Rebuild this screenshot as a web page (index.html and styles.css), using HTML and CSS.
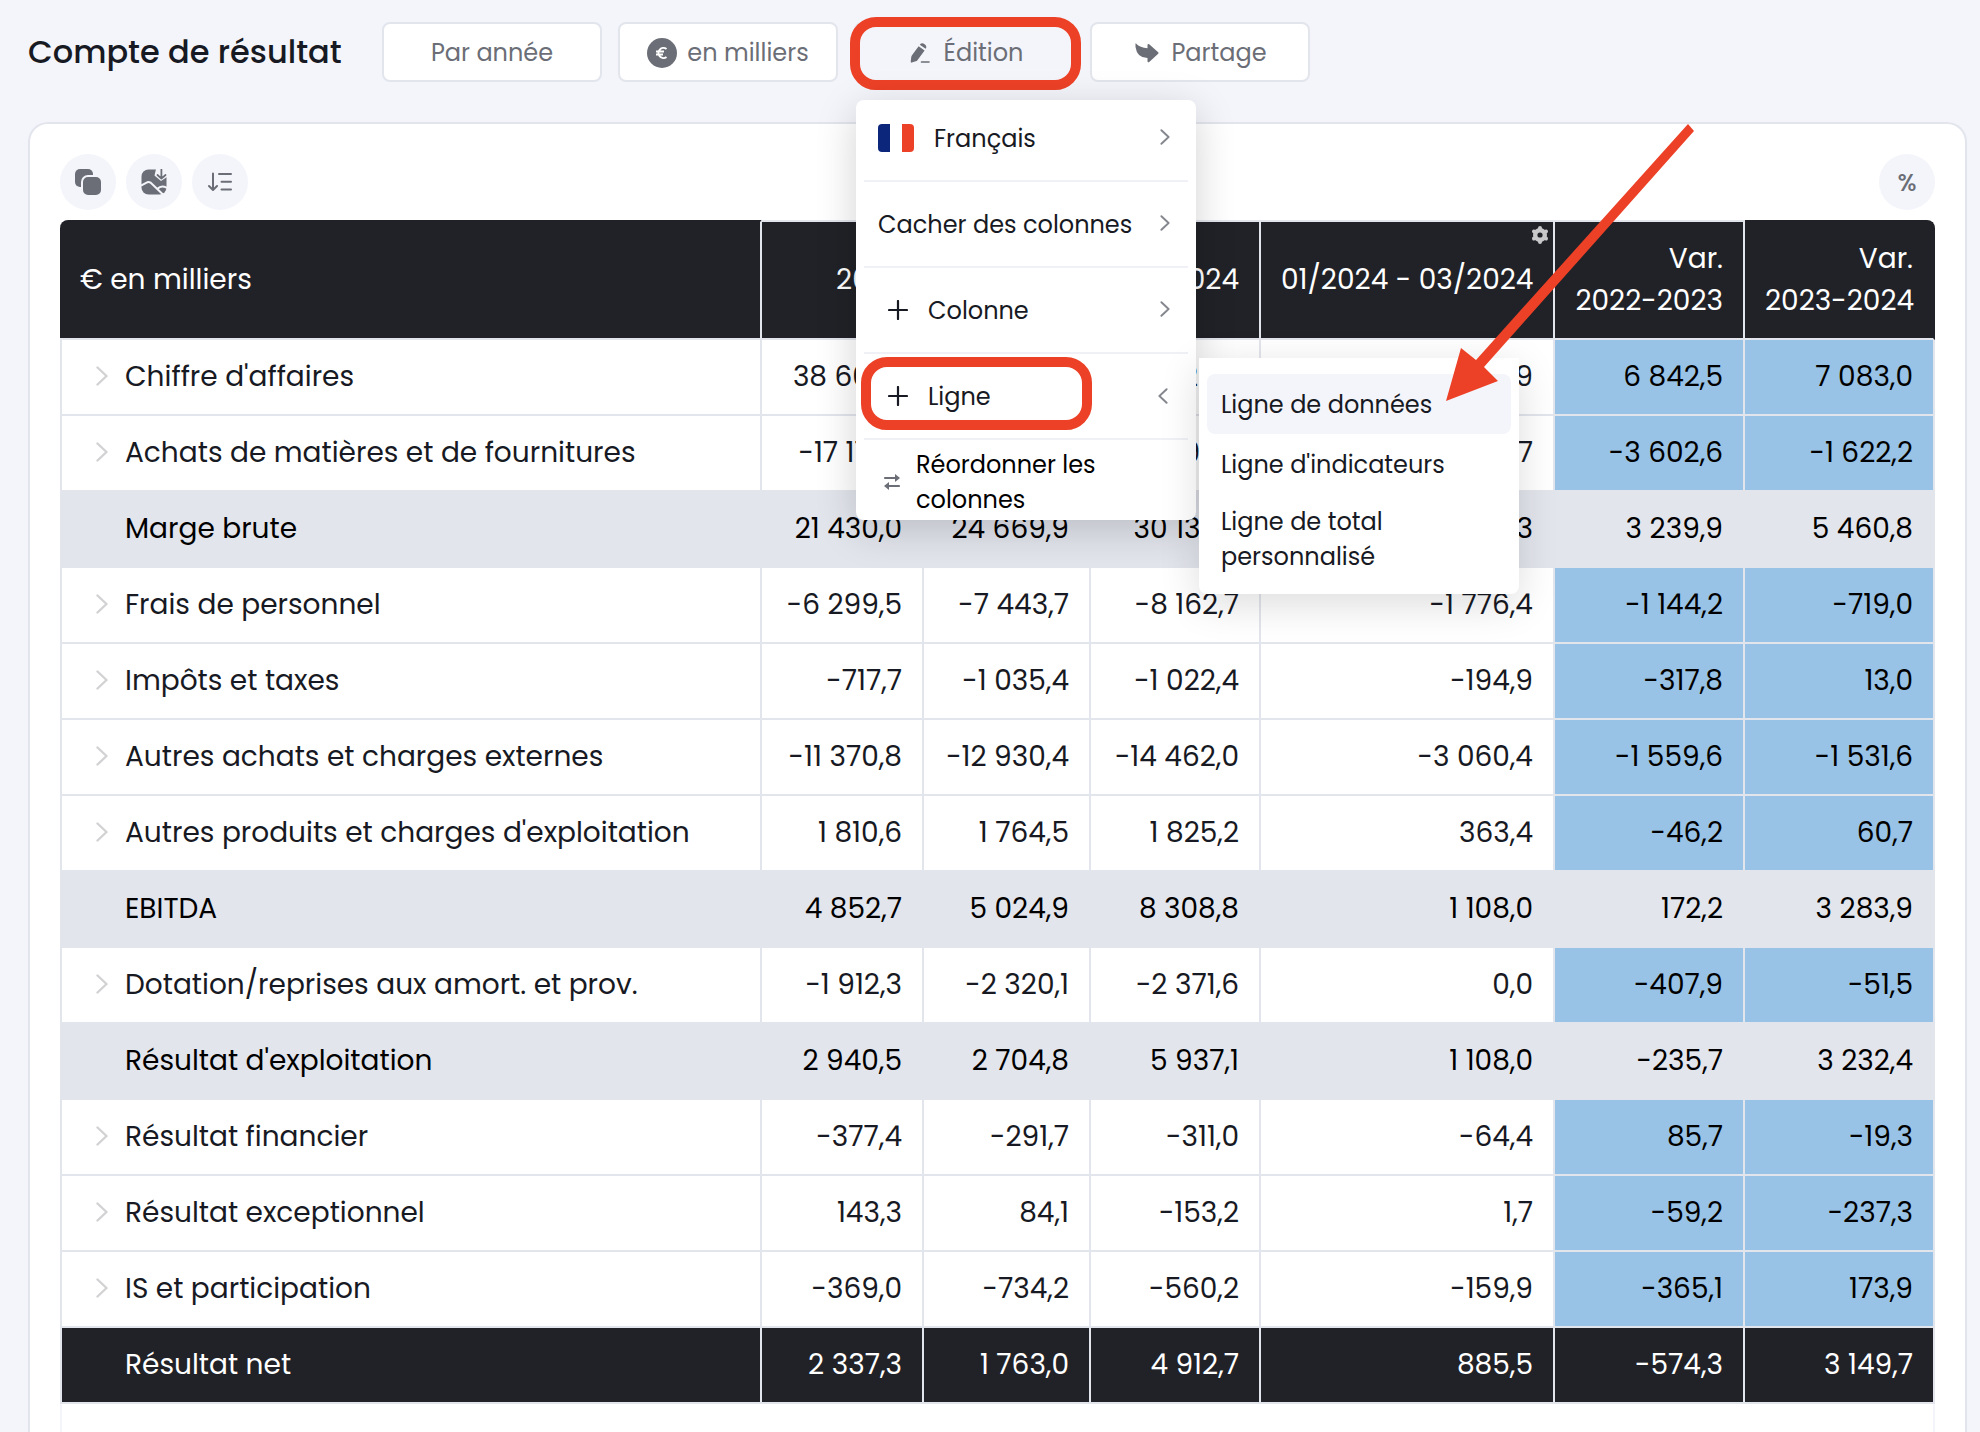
FILE: index.html
```html
<!DOCTYPE html>
<html lang="fr">
<head>
    <meta charset="UTF-8">
    <meta name="viewport" content="width=device-width, initial-scale=1.0">
    <title>Compte de résultat</title>
    <link rel="stylesheet" href="styles.css">
</head>
<body>
    <!-- Shared icons -->
    <svg class="sprite" aria-hidden="true">
        <symbol id="chevron" viewBox="0 0 12 20">
            <path d="M1.5 1.5 L10.5 10 L1.5 18.5" fill="none" stroke="currentColor" stroke-width="2.4" stroke-linecap="round" stroke-linejoin="round"/>
        </symbol>
        <symbol id="plus" viewBox="0 0 20 20">
            <path d="M10 1 V19 M1 10 H19" fill="none" stroke="currentColor" stroke-width="2.2" stroke-linecap="round"/>
        </symbol>
    </svg>

    <header class="topbar">
        <h1>Compte de résultat</h1>
        <div class="actions">
            <button class="btn" type="button">Par année</button>
            <button class="btn" type="button">
                <svg width="30" height="30" viewBox="0 0 30 30">
                    <circle cx="15" cy="15" r="15" fill="#6b6e76"/>
                    <path d="M19.5 11 A5 5 0 1 0 19.5 19 M9 13.6 H17 M9 16.6 H16" fill="none" stroke="#fff" stroke-width="2"/>
                </svg>
                en milliers
            </button>
            <div class="dropdown">
                <button class="btn btn-active marked" type="button" aria-expanded="true">
                    <svg width="20" height="20" viewBox="0 0 20 20">
                        <path d="M8.6 3.2 L14.6 7.4 L7.4 17.2 Q6.8 18 5.8 18.3 L1.8 19.6 Q0.7 19.8 0.7 18.6 L1.2 14.4 Q1.3 13.3 2 12.3 Z" fill="currentColor"/>
                        <path d="M9.8 1.7 Q11.8 -0.7 14.6 1.2 Q17.3 3.3 15.7 5.8 Z" fill="currentColor"/>
                        <path d="M11.5 19 H19" stroke="currentColor" stroke-width="1.6" stroke-linecap="round"/>
                    </svg>
                    Édition
                </button>

                <div class="menu">
                    <button class="menu-item" type="button">
                        <svg class="flag" width="36" height="28" viewBox="0 0 36 28">
                            <path d="M12 0 H4 Q0 0 0 4 V24 Q0 28 4 28 H12 Z" fill="#0c267c"/>
                            <path d="M24 0 H32 Q36 0 36 4 V24 Q36 28 32 28 H24 Z" fill="#ec4127"/>
                        </svg>
                        <span>Français</span>
                        <svg class="arrow" width="10" height="16"><use href="#chevron"/></svg>
                    </button>
                    <button class="menu-item" type="button">
                        <span>Cacher des colonnes</span>
                        <svg class="arrow" width="10" height="16"><use href="#chevron"/></svg>
                    </button>
                    <button class="menu-item menu-item-add" type="button">
                        <svg width="20" height="20"><use href="#plus"/></svg>
                        <span>Colonne</span>
                        <svg class="arrow" width="10" height="16"><use href="#chevron"/></svg>
                    </button>
                    <div class="dropdown">
                        <button class="menu-item menu-item-add marked" type="button" aria-expanded="true">
                            <svg width="20" height="20"><use href="#plus"/></svg>
                            <span>Ligne</span>
                            <svg class="arrow arrow-back" width="10" height="16"><use href="#chevron"/></svg>
                        </button>
                        <div class="submenu">
                            <button class="submenu-item selected" type="button">Ligne de données</button>
                            <button class="submenu-item" type="button">Ligne d'indicateurs</button>
                            <button class="submenu-item" type="button">Ligne de total personnalisé</button>
                            <svg class="pointer" width="248" height="278" viewBox="0 0 248 278">
                                <path d="M0 277 L15 224 L30 236 L242 0 L248 7 L38 243 L52 257 Z" fill="#ec4127"/>
                            </svg>
                        </div>
                    </div>
                    <button class="menu-item menu-item-reorder" type="button">
                        <svg width="16" height="18" viewBox="0 0 16 18">
                            <path d="M0.8 5 H13 M15.2 13 H3" fill="none" stroke="#6b6e76" stroke-width="1.8" stroke-linecap="round"/>
                            <path d="M11 1 L16 5 L11 9 Z M5 9 L0 13 L5 17 Z" fill="#6b6e76"/>
                        </svg>
                        <span>Réordonner les colonnes</span>
                    </button>
                </div>
            </div>
            <button class="btn btn-share" type="button">
                <svg width="24" height="20" viewBox="0 0 24 20">
                    <path d="M0.5 0.8 Q0 0 1 0.6 Q5 5 12.5 5.2 V2 Q12.7 0.2 14.2 1.3 L23.2 9.2 Q24 10 23.2 10.8 L14.2 18.9 Q12.7 20 12.5 18.2 V15 Q2 15 0.5 4 Z" fill="currentColor"/>
                </svg>
                Partage
            </button>
        </div>
    </header>

    <main class="card">
        <div class="toolbar">
            <button class="round" type="button" aria-label="Copier">
                <svg width="28" height="28" viewBox="0 0 28 28">
                    <rect x="1" y="1" width="18" height="18" rx="5" fill="#6b6e76"/>
                    <rect x="8" y="8" width="20" height="20" rx="6" fill="#6b6e76" stroke="#f4f5fa" stroke-width="2"/>
                </svg>
            </button>
            <button class="round" type="button" aria-label="Exporter en image">
                <svg width="26" height="26" viewBox="0 0 26 26">
                    <rect x="0.5" y="0.5" width="25" height="25" rx="7" fill="#6b6e76"/>
                    <path d="M0 16.5 L6.5 13.2 Q8 12.6 9.5 13.6 L22 25.5 M16.5 19.8 Q20.5 15.5 26 19" fill="none" stroke="#f4f5fa" stroke-width="2"/>
                    <path d="M15 0 H26 V8 L20 12 L13.5 6.5 Z" fill="#f4f5fa"/>
                    <path d="M20.4 0.5 V9 M16.5 6 L20.4 9.6 L24.5 6" fill="none" stroke="#6b6e76" stroke-width="1.8" stroke-linecap="round" stroke-linejoin="round"/>
                </svg>
            </button>
            <button class="round" type="button" aria-label="Trier">
                <svg width="24" height="20" viewBox="0 0 24 20">
                    <path d="M5 1.5 V17.5 M1 14 L5 18 L9 14 M11 2 H23 M13.5 9.8 H23 M13.5 17.5 H23" fill="none" stroke="#6b6e76" stroke-width="2" stroke-linecap="round" stroke-linejoin="round"/>
                </svg>
            </button>
            <button class="round round-last" type="button">%</button>
        </div>

        <table>
            <colgroup>
                <col>
                <col class="col-2022">
                <col class="col-2023">
                <col class="col-2024">
                <col class="col-period">
                <col class="col-var">
                <col class="col-var">
            </colgroup>
            <thead>
                <tr>
                    <th>€ en milliers</th>
                    <th>2022</th>
                    <th>2023</th>
                    <th>2024</th>
                    <th class="has-gear">01/2024 - 03/2024
                        <svg class="gear" width="18" height="18" viewBox="0 0 18 18">
                            <circle cx="9" cy="9" r="4.8" fill="none" stroke="#c8c8ca" stroke-width="4.4"/>
                            <path d="M9 2 V3 M9 15 V16 M3 5.5 L4 6 M14 12 L15 12.5 M15 5.5 L14 6 M4 12 L3 12.5" stroke="#c8c8ca" stroke-width="4" stroke-linecap="round"/>
                        </svg>
                    </th>
                    <th>Var.<br>2022-2023</th>
                    <th>Var.<br>2023-2024</th>
                </tr>
            </thead>
            <tbody>
                <tr>
                    <td><svg class="toggle" width="12" height="20"><use href="#chevron"/></svg>Chiffre d'affaires</td>
                    <td>38 604,1</td><td>45 446,6</td><td>52 529,6</td><td>10 132,9</td><td>6 842,5</td><td>7 083,0</td>
                </tr>
                <tr>
                    <td><svg class="toggle" width="12" height="20"><use href="#chevron"/></svg>Achats de matières et de fournitures</td>
                    <td>-17 174,1</td><td>-20 776,7</td><td>-22 398,9</td><td>-4 356,7</td><td>-3 602,6</td><td>-1 622,2</td>
                </tr>
                <tr class="subtotal">
                    <td>Marge brute</td>
                    <td>21 430,0</td><td>24 669,9</td><td>30 130,7</td><td>5 776,3</td><td>3 239,9</td><td>5 460,8</td>
                </tr>
                <tr>
                    <td><svg class="toggle" width="12" height="20"><use href="#chevron"/></svg>Frais de personnel</td>
                    <td>-6 299,5</td><td>-7 443,7</td><td>-8 162,7</td><td>-1 776,4</td><td>-1 144,2</td><td>-719,0</td>
                </tr>
                <tr>
                    <td><svg class="toggle" width="12" height="20"><use href="#chevron"/></svg>Impôts et taxes</td>
                    <td>-717,7</td><td>-1 035,4</td><td>-1 022,4</td><td>-194,9</td><td>-317,8</td><td>13,0</td>
                </tr>
                <tr>
                    <td><svg class="toggle" width="12" height="20"><use href="#chevron"/></svg>Autres achats et charges externes</td>
                    <td>-11 370,8</td><td>-12 930,4</td><td>-14 462,0</td><td>-3 060,4</td><td>-1 559,6</td><td>-1 531,6</td>
                </tr>
                <tr>
                    <td><svg class="toggle" width="12" height="20"><use href="#chevron"/></svg>Autres produits et charges d'exploitation</td>
                    <td>1 810,6</td><td>1 764,5</td><td>1 825,2</td><td>363,4</td><td>-46,2</td><td>60,7</td>
                </tr>
                <tr class="subtotal">
                    <td>EBITDA</td>
                    <td>4 852,7</td><td>5 024,9</td><td>8 308,8</td><td>1 108,0</td><td>172,2</td><td>3 283,9</td>
                </tr>
                <tr>
                    <td><svg class="toggle" width="12" height="20"><use href="#chevron"/></svg>Dotation/reprises aux amort. et prov.</td>
                    <td>-1 912,3</td><td>-2 320,1</td><td>-2 371,6</td><td>0,0</td><td>-407,9</td><td>-51,5</td>
                </tr>
                <tr class="subtotal">
                    <td>Résultat d'exploitation</td>
                    <td>2 940,5</td><td>2 704,8</td><td>5 937,1</td><td>1 108,0</td><td>-235,7</td><td>3 232,4</td>
                </tr>
                <tr>
                    <td><svg class="toggle" width="12" height="20"><use href="#chevron"/></svg>Résultat financier</td>
                    <td>-377,4</td><td>-291,7</td><td>-311,0</td><td>-64,4</td><td>85,7</td><td>-19,3</td>
                </tr>
                <tr>
                    <td><svg class="toggle" width="12" height="20"><use href="#chevron"/></svg>Résultat exceptionnel</td>
                    <td>143,3</td><td>84,1</td><td>-153,2</td><td>1,7</td><td>-59,2</td><td>-237,3</td>
                </tr>
                <tr>
                    <td><svg class="toggle" width="12" height="20"><use href="#chevron"/></svg>IS et participation</td>
                    <td>-369,0</td><td>-734,2</td><td>-560,2</td><td>-159,9</td><td>-365,1</td><td>173,9</td>
                </tr>
                <tr class="total">
                    <td>Résultat net</td>
                    <td>2 337,3</td><td>1 763,0</td><td>4 912,7</td><td>885,5</td><td>-574,3</td><td>3 149,7</td>
                </tr>
            </tbody>
        </table>
        <div class="table-end"></div>
    </main>
</body>
</html>
```
FILE: styles.css
```css
* {
    box-sizing: border-box;
}

body {
    display: flex;
    flex-direction: column;
    min-height: 100vh;
    margin: 0;
    padding: 0 13px 0 28px;
    background-color: #f4f5fa;
    color: #171923;
    font-family: Poppins, Inter, sans-serif;
    font-size: 28px;
}

button {
    font: inherit;
    color: inherit;
    border: none;
    background: none;
    padding: 0;
    cursor: pointer;
}

svg {
    flex: none;
}

.sprite {
    position: absolute;
    width: 0;
    height: 0;
}

/* Top bar */
.topbar {
    display: flex;
    align-items: center;
    gap: 40px;
    height: 122px;
    padding-bottom: 18px;
}

h1 {
    margin: 0;
    font-size: 32px;
    font-weight: 500;
    white-space: nowrap;
    width: 314px;
}

.actions {
    display: flex;
    gap: 16px;
}

.btn {
    display: flex;
    align-items: center;
    justify-content: center;
    gap: 10px;
    width: 220px;
    height: 60px;
    padding-top: 1px;
    border: 2px solid #e3e5ed;
    border-radius: 8px;
    background-color: #fff;
    color: #6b6e76;
    font-size: 24px;
}

.btn-active {
    gap: 14px;
    padding-left: 5px;
    background-color: #f4f5fa;
}

.btn-share {
    gap: 12px;
    padding-left: 2px;
}

.dropdown {
    position: relative;
}

/* Red highlight drawn around a control */
.marked::after {
    content: "";
    position: absolute;
    border: 10px solid #ec4127;
    border-radius: 26px;
}

.btn.marked::after {
    inset: -5px -7px -8px -4px;
}

/* Edition menu */
.menu {
    position: absolute;
    top: 78px;
    left: 2px;
    z-index: 2;
    width: 340px;
    padding: 0 8px;
    border-radius: 8px;
    background-color: #fff;
    box-shadow: 0 10px 40px rgba(0, 0, 0, 0.18);
    font-size: 24px;
}

.menu-item {
    display: flex;
    align-items: center;
    width: 100%;
    height: 86px;
    padding: 0 18px 0 14px;
    border-bottom: 2px solid #f0f1f6;
    text-align: left;
    white-space: nowrap;
}

.menu > .menu-item:first-child {
    height: 82px;
    padding-bottom: 4px;
}

.menu-item-add {
    padding-left: 24px;
    gap: 20px;
}

.flag {
    margin-right: 20px;
}

.arrow {
    margin-bottom: 2px;
    margin-left: auto;
    color: #85878f;
}

.arrow-back {
    margin-right: 2px;
    margin-bottom: 0;
    transform: rotate(180deg);
}

.menu-item.marked::after {
    inset: 3px 96px 10px -3px;
}

.menu-item-reorder {
    height: 80px;
    padding-top: 4px;
    padding-left: 20px;
    gap: 16px;
    border-bottom: none;
    color: #000;
    line-height: 35px;
    white-space: normal;
}

.menu-item-reorder span {
    width: 200px;
}

.submenu {
    position: absolute;
    top: 4px;
    left: 335px;
    width: 320px;
    padding: 16px 8px 10px;
    border-radius: 0 0 8px 8px;
    background-color: #fff;
    box-shadow: 0 10px 40px rgba(0, 0, 0, 0.14);
}

.submenu-item {
    display: block;
    width: 100%;
    min-height: 60px;
    padding: 10px 80px 10px 14px;
    border-radius: 8px;
    line-height: 35px;
    text-align: left;
}

.submenu-item:not(:last-of-type) {
    padding-right: 14px;
}

.submenu-item.selected {
    background-color: #f4f5fa;
}

.pointer {
    position: absolute;
    left: 247px;
    bottom: 192px;
    pointer-events: none;
}

/* Card */
.card {
    display: flex;
    flex: 1;
    flex-direction: column;
    padding: 30px 30px 0;
    border: 2px solid #e3e5ed;
    border-bottom: none;
    border-radius: 20px 20px 0 0;
    background-color: #fff;
}

.toolbar {
    display: flex;
    gap: 10px;
    margin-bottom: 10px;
}

.round {
    display: flex;
    align-items: center;
    justify-content: center;
    width: 56px;
    height: 56px;
    border-radius: 50%;
    background-color: #f4f5fa;
    color: #6b6e76;
    font-size: 24px;
    font-weight: 500;
}

.round-last {
    margin-left: auto;
}

/* Table */
table {
    width: 100%;
    table-layout: fixed;
    border-collapse: separate;
    border-spacing: 0;
}

.col-2022 {
    width: 162px;
}

.col-2023 {
    width: 167px;
}

.col-2024 {
    width: 170px;
}

.col-period {
    width: 294px;
}

.col-var {
    width: 190px;
}

th, td {
    padding: 0 20px;
    border-right: 2px solid #e3e5ed;
    border-bottom: 2px solid #e3e5ed;
    text-align: right;
    white-space: nowrap;
}

th {
    height: 120px;
    border-top: 2px solid #e3e5ed;
    background-color: #212227;
    color: #fff;
    font-weight: 400;
    line-height: 42px;
}

th:first-child {
    border-top-color: #212227;
    border-radius: 8px 0 0 0;
    text-align: left;
}

th:last-child {
    border-top-color: #212227;
    border-right-color: #212227;
    border-radius: 0 8px 0 0;
}

td {
    height: 76px;
}

td:first-child {
    padding-left: 63px;
    border-left: 2px solid #e3e5ed;
    text-align: left;
}

td:nth-child(n+6) {
    background-color: #99c3e6;
    color: #000;
}

.has-gear {
    position: relative;
}

.gear {
    position: absolute;
    top: 4px;
    right: 4px;
}

.toggle {
    margin: 0 17px 0 -29px;
    color: #d2d2d4;
}

.subtotal td,
.subtotal td:nth-child(n+6) {
    border-color: #e3e5ed;
    background-color: #e3e5ed;
    color: #000;
}

.total td,
.total td:nth-child(n+6) {
    background-color: #212227;
    color: #fff;
}

.table-end {
    flex: 1;
    min-height: 28px;
    border: solid #f4f5fa;
    border-width: 0 2px;
}
```
